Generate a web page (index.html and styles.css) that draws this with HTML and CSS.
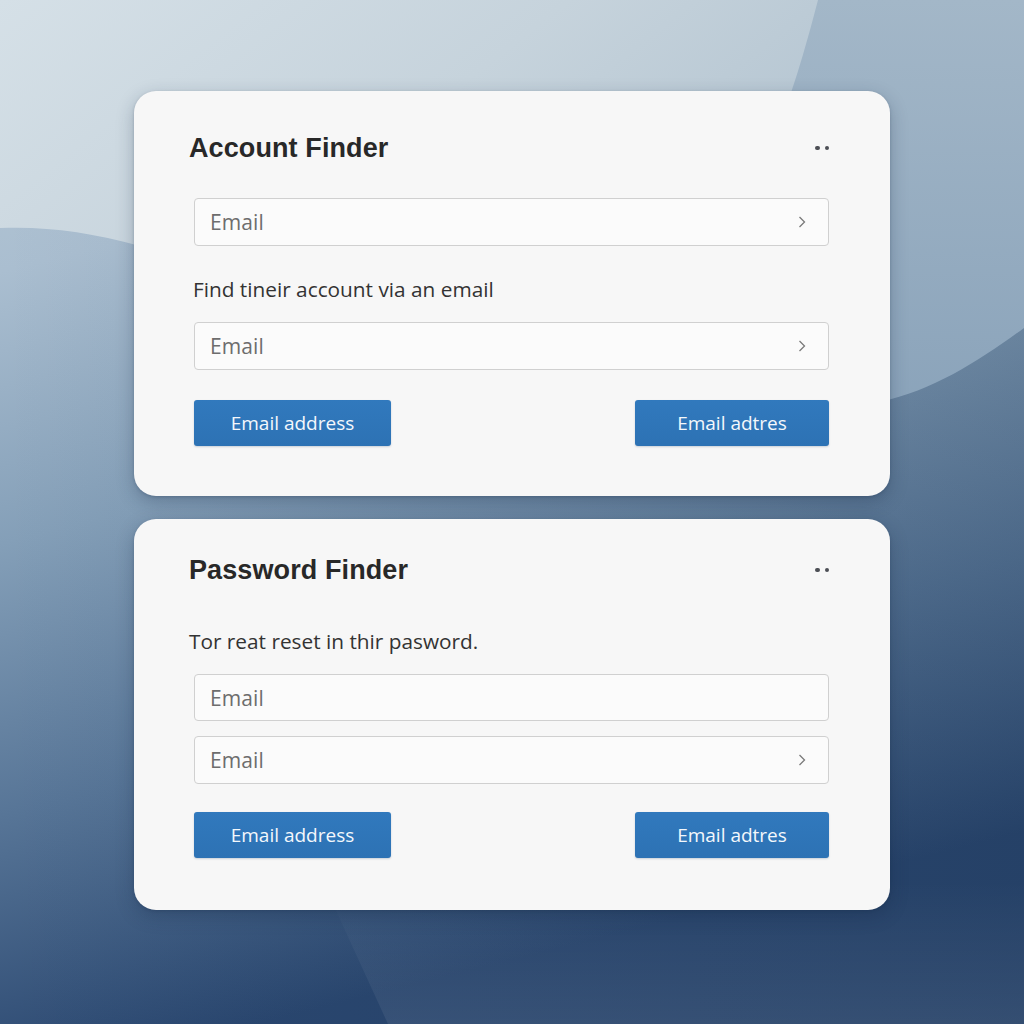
FILE: index.html
```html
<!DOCTYPE html>
<html lang="en">
<head>
<meta charset="utf-8">
<title>Account Finder</title>
<link rel="stylesheet" href="styles.css">
</head>
<body>
<div class="backdrop" aria-hidden="true">
  <svg viewBox="0 0 1024 1024" preserveAspectRatio="none" width="1024" height="1024">
    <defs>
      <linearGradient id="base" x1="0" y1="0" x2="0.25" y2="1">
        <stop offset="0" stop-color="#b9cad7"/>
        <stop offset="0.25" stop-color="#aabed0"/>
        <stop offset="0.5" stop-color="#849fb8"/>
        <stop offset="0.75" stop-color="#577597"/>
        <stop offset="1" stop-color="#2a4770"/>
      </linearGradient>
      <linearGradient id="shade" x1="0" y1="0" x2="1" y2="0">
        <stop offset="0" stop-color="#10263f" stop-opacity="0"/>
        <stop offset="1" stop-color="#10263f" stop-opacity="0.18"/>
      </linearGradient>
      <linearGradient id="light" x1="0" y1="0" x2="1" y2="0.4">
        <stop offset="0" stop-color="#d5e0e7"/>
        <stop offset="0.6" stop-color="#c6d3dc"/>
        <stop offset="1" stop-color="#b7c7d3"/>
      </linearGradient>
      <linearGradient id="mid" x1="0" y1="0" x2="0" y2="1">
        <stop offset="0" stop-color="#a3b7c8"/>
        <stop offset="1" stop-color="#8aa3ba"/>
      </linearGradient>
      <linearGradient id="facet" gradientUnits="userSpaceOnUse" x1="0" y1="880" x2="0" y2="1024">
        <stop offset="0" stop-color="#ffffff" stop-opacity="0"/>
        <stop offset="1" stop-color="#ffffff" stop-opacity="0.07"/>
      </linearGradient>
    </defs>
    <rect width="1024" height="1024" fill="url(#base)"/>
    <rect width="1024" height="1024" fill="url(#shade)"/>
    <path d="M815 0 H1024 V328 C980 360 935 390 880 402 L640 420 C720 300 790 120 815 0 Z" fill="url(#mid)"/>
    <path d="M0 0 H818 C805 50 792 95 770 150 C600 250 350 270 140 246 C90 232 45 226 0 228 Z" fill="url(#light)"/>
    <path d="M322 880 L388 1024 H1024 V880 Z" fill="url(#facet)"/>
  </svg>
</div>

<main class="stack">
  <section class="card card-account">
    <header class="card-head">
      <h2 class="card-title">Account Finder</h2>
      <span class="more" aria-label="More"><i></i><i></i></span>
    </header>
    <div class="field">
      <span class="placeholder">Email</span>
      <svg class="chev" viewBox="0 0 8 12" width="8" height="12"><polyline points="1.5,1 6.5,6 1.5,11" fill="none" stroke="#7a7a7a" stroke-width="1.3"/></svg>
    </div>
    <p class="hint hint-account">Find tineir account via an email</p>
    <div class="field">
      <span class="placeholder">Email</span>
      <svg class="chev" viewBox="0 0 8 12" width="8" height="12"><polyline points="1.5,1 6.5,6 1.5,11" fill="none" stroke="#7a7a7a" stroke-width="1.3"/></svg>
    </div>
    <div class="actions">
      <button class="btn btn-left">Email address</button>
      <button class="btn btn-right">Email adtres</button>
    </div>
  </section>

  <section class="card card-password">
    <header class="card-head">
      <h2 class="card-title">Password Finder</h2>
      <span class="more" aria-label="More"><i></i><i></i></span>
    </header>
    <p class="hint hint-password">Tor reat reset in thir pasword.</p>
    <div class="field field-tight">
      <span class="placeholder">Email</span>
    </div>
    <div class="field">
      <span class="placeholder">Email</span>
      <svg class="chev" viewBox="0 0 8 12" width="8" height="12"><polyline points="1.5,1 6.5,6 1.5,11" fill="none" stroke="#7a7a7a" stroke-width="1.3"/></svg>
    </div>
    <div class="actions">
      <button class="btn btn-left">Email address</button>
      <button class="btn btn-right">Email adtres</button>
    </div>
  </section>
</main>
</body>
</html>
```

FILE: styles.css
```css
* { box-sizing: border-box; }

html, body {
  margin: 0;
  padding: 0;
  width: 1024px;
  height: 1024px;
  overflow: hidden;
}

body {
  position: relative;
  font-family: "Open Sans", "Liberation Sans", Arial, sans-serif;
  background: #7f99b2;
}

.backdrop {
  position: absolute;
  inset: 0;
  z-index: 0;
}
.backdrop svg { display: block; }

.stack {
  position: relative;
  z-index: 1;
  display: flex;
  flex-direction: column;
  gap: 23px;
  padding: 91px 0 0 134px;
  width: 890px;
}

.card {
  width: 756px;
  background: #f7f7f7;
  border-radius: 22px;
  box-shadow: 0 6px 18px rgba(20, 40, 70, 0.28), 0 1px 3px rgba(20, 40, 70, 0.2);
  padding: 0 61px 50px 60px;
  display: flex;
  flex-direction: column;
}

.card-account { padding-top: 41px; height: 405px; }
.card-password { padding-top: 35px; height: 391px; }

.card-head {
  display: flex;
  align-items: center;
  justify-content: space-between;
  height: 32px;
  margin-left: -5px;
}

.card-title {
  margin: 0;
  font-family: "Liberation Sans", Arial, sans-serif;
  font-weight: 700;
  font-size: 27px;
  line-height: 32px;
  color: #282828;
  letter-spacing: 0.1px;
}

.more {
  display: flex;
  gap: 5px;
  margin-right: 0;
}
.more i {
  display: block;
  width: 4.5px;
  height: 4.5px;
  border-radius: 50%;
  background: #4c4f55;
}

.field {
  height: 48px;
  border: 1px solid #d0d0d0;
  border-radius: 4px;
  background: #fbfbfb;
  display: flex;
  align-items: center;
  justify-content: space-between;
  padding: 0 22px 0 15px;
}

.card-account .field:first-of-type { margin-top: 34px; }

.placeholder {
  font-size: 21px;
  color: #6d6d6d;
  letter-spacing: 0.1px;
}

.chev { display: block; }

.hint {
  margin: 0;
  font-size: 20.8px;
  line-height: 28px;
  color: #333;
}

.hint-account { margin: 29px 0 19px -1px; }
.hint-password { margin: 41px 0 19px -5px; }

.field-tight { height: 47px; margin-bottom: 15px; }

.actions {
  display: flex;
  justify-content: space-between;
  margin-top: 30px;
}
.card-password .actions { margin-top: 28px; }

.btn {
  height: 46px;
  border: 0;
  border-radius: 3px;
  background: #2f76ba;
  background-image: linear-gradient(180deg, #3179bd 0%, #2d72b4 100%);
  color: #f4f8fc;
  font-family: "Open Sans", "Liberation Sans", Arial, sans-serif;
  font-size: 19px;
  padding: 0;
  box-shadow: 0 1px 2px rgba(20, 50, 90, 0.2);
}
.btn-left { width: 197px; }
.btn-right { width: 194px; }
```
